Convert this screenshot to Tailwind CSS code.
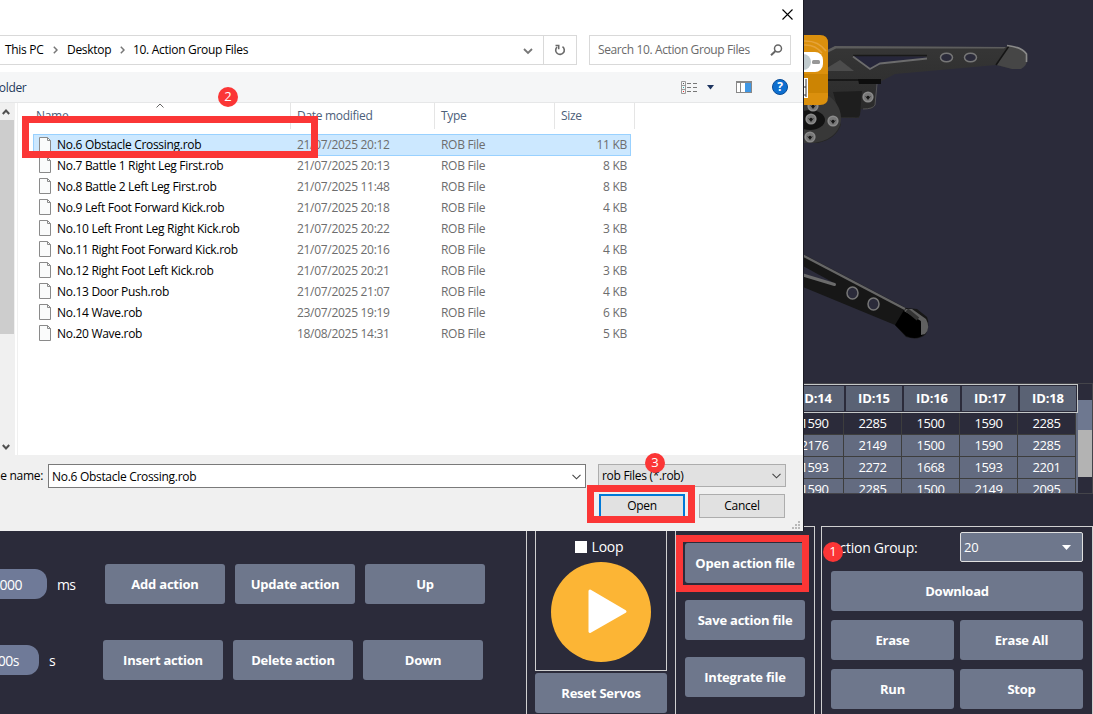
<!DOCTYPE html>
<html lang="en">
<head>
<meta charset="utf-8">
<title>Open action file</title>
<script src="https://cdn.jsdelivr.net/npm/@tailwindcss/browser@4"></script>
</head>
<body class="bg-[#2b2b3a] overflow-hidden">
<div class="relative w-[1093px] h-[714px] overflow-hidden bg-[#2b2b3a] font-['Open_Sans','Noto_Sans',sans-serif] text-white whitespace-nowrap">

<!-- Main application -->
<div class="flex flex-col h-full">
  <!-- 3D robot view -->
  <div class="h-[383px] flex justify-end shrink-0">
    <svg width="300" height="383" viewBox="0 0 300 383">
      <defs>
        <linearGradient id="leg" x1="0" y1="0" x2="0" y2="1"><stop offset="0" stop-color="#363636"/><stop offset="1" stop-color="#252525"/></linearGradient>
        <g id="screw"><circle r="5.6" fill="#8b8b8b"/><circle r="4" fill="#777"/><path d="M-3 -1L0 .4L3 -1L0 3Z" fill="#1c1c1c"/><circle r="1.3" fill="#161616"/></g>
      </defs>
      <path d="M0 52H34L42 46L213 47L216 45L229 49Q235 54 234 61Q230 70 220 69L203 65L102 74L83 84L82 104Q81 109 76 109H68L66 118H46L48 125Q43 139 25 143H0Z" fill="url(#leg)"/>
      <path d="M30 52L42 46L213 47L211 48.500L43 48.500L34 53Z" fill="#5d5d5d"/>
      <path d="M60 56L133 56.500L134 59L89 64L77 70Z" fill="#26263a"/>
      <path d="M60 55.500L134 55.500" stroke="#191919" stroke-width="1.500"/>
      <path d="M60 56.500L77 69L87 63.500L134 58.500" fill="none" stroke="#6c6c6c" stroke-width="1.800"/>
      <path d="M29 71L47 60L61 71Z" fill="#4c4c4c"/>
      <path d="M28 80H67" stroke="#111" stroke-width="1.500"/>
      <path d="M65 79H88V84H66Z" fill="#0d0d0d"/>
      <g fill="#2b2b3a" stroke="#777" stroke-width="1.500"><ellipse cx="153.500" cy="57.500" rx="6" ry="4.300"/><ellipse cx="177.500" cy="57.500" rx="6" ry="4.300"/></g>
      <path d="M215 46Q228 46 234 54Q236 65 228 69L219 69L204 65Z" fill="#464646"/>
      <path d="M203 65L216 46" stroke="#151515" stroke-width="1.500"/>
      <path d="M214 45.500Q229 47 233.500 54V62" fill="none" stroke="#8a8a8a" stroke-width="1.600"/>
      <path d="M40 92L69 91L67 115Q66 118 62 117L47 117Z" fill="#1e1e1e"/>
      <path d="M36 96Q49 106 48 121Q44 140 20 143H10V100Z" fill="#383838"/>
      <path d="M84 84L82 105Q80 109 70 109" fill="none" stroke="#555"/>
      <ellipse cx="17" cy="120" rx="15" ry="10" fill="#121212"/>
      <use href="#screw" x="75" y="97"/><use href="#screw" x="20" y="106"/><use href="#screw" x="18" y="119"/><use href="#screw" x="40" y="121"/><use href="#screw" x="17" y="137"/>
      <path d="M10 35H27Q35 35 35 43V97Q35 105 27 105H10Z" fill="#db900d"/>
      <path d="M10 41Q25 40 33 51M10 45Q22 44 29 53" stroke="#e5a33a" fill="none" stroke-width="1.500"/>
      <path d="M10 74H35V93H10Z" fill="#cc8403"/>
      <rect x="-10" y="52" width="40" height="20" rx="8" fill="white"/><circle cx="10" cy="62" r="8" fill="#c0cacd"/><rect x="19" y="60" width="8" height="4" rx="1.500" fill="#979797"/>
      <path d="M10 78H15V98H10Z" fill="white"/><path d="M13 79V97M10 87H13M10 95H13" stroke="#333" stroke-width="1"/>
      <path d="M10 254L113 308L124 309L134 317Q137 324 133 334Q126 341 113 337L102 325L10 287Z" fill="#171717"/>
      <path d="M10 255.500L112 309" stroke="#666" stroke-width="2.500"/>
      <path d="M10 266L41 283L10 276Z" fill="#2b2b3a"/>
      <path d="M10 275L41.500 284.500" stroke="#6b6b6b" stroke-width="3" stroke-linecap="round"/>
      <g fill="#2b2b3a" stroke="#777" stroke-width="1.500"><ellipse cx="59.500" cy="293" rx="5.500" ry="6"/><ellipse cx="80.500" cy="304" rx="5.500" ry="6"/></g>
      <path d="M111 310L102 325L113 336Q124 341 131 334L127 320Z" fill="#000"/>
      <path d="M113 309L119 309L133 319Q138 328 132 334L128 335V321L111 311Z" fill="#606060"/>
      <path d="M114 310L125 319" stroke="#333" stroke-width="4"/>
    </svg>
  </div>

  <!-- Servo value table -->
  <div class="h-[111px] shrink-0 flex justify-end border-y border-r border-[#44444a]">
    <div class="w-[292px] flex flex-col overflow-hidden">
      <div class="h-[29px] shrink-0 flex border border-[#c5c8c8] p-px gap-[2px] text-[13px] font-bold tracking-[-0.15px]" id="thead"></div>
      <div class="flex flex-col text-[13px] tracking-[-0.42px] bg-[#636b80]" id="tbody"></div>
    </div>
    <div class="w-[14px] flex flex-col pt-4">
      <div class="h-[30px] bg-[#6e7890]"></div>
      <div class="h-[47px] bg-[#b3b3b3]"></div>
    </div>
  </div>

  <!-- Control panels -->
  <div class="mt-8 h-[188px] flex text-[13px] font-bold tracking-[-0.22px] shrink-0">
    <div class="w-[527px] border-r border-t border-[#d0d0d0] flex flex-col pt-[37px]">
      <div class="flex h-10 items-center">
        <div class="w-[47px] h-[30px] rounded-r-[12px] bg-[#6f7a98] flex items-center justify-end pt-0.5 pr-[25px] font-normal text-sm tracking-[-0.5px]">1000</div>
        <div class="w-[58px] pt-0.5 pl-[10px] font-normal text-sm tracking-[-0.6px]">ms</div>
        <div class="flex gap-[10px]">
          <div class="w-[120px] h-10 pt-0.5 rounded-[3px] bg-[#6e778c] flex items-center justify-center">Add action</div>
          <div class="w-[120px] h-10 pt-0.5 rounded-[3px] bg-[#6e778c] flex items-center justify-center">Update action</div>
          <div class="w-[120px] h-10 pt-0.5 rounded-[3px] bg-[#6e778c] flex items-center justify-center">Up</div>
        </div>
      </div>
      <div class="flex h-10 items-center mt-9">
        <div class="w-[39px] h-[30px] rounded-r-[12px] bg-[#6f7a98] flex items-center justify-end pt-0.5 pr-5 font-normal text-sm tracking-[-0.5px]">0.00s</div>
        <div class="w-16 pt-0.5 pl-[10px] font-normal text-sm">s</div>
        <div class="flex gap-[10px]">
          <div class="w-[120px] h-10 pt-0.5 rounded-[3px] bg-[#6e778c] flex items-center justify-center">Insert action</div>
          <div class="w-[120px] h-10 pt-0.5 rounded-[3px] bg-[#6e778c] flex items-center justify-center">Delete action</div>
          <div class="w-[120px] h-10 pt-0.5 rounded-[3px] bg-[#6e778c] flex items-center justify-center">Down</div>
        </div>
      </div>
    </div>
    <div class="ml-2 w-[132px] flex flex-col gap-[2px]">
      <div class="h-[145px] border border-[#d0d0d0] flex flex-col items-center pt-[10px]">
        <div class="h-[20px] flex items-center gap-[5px] font-normal text-sm pr-[4px] tracking-[-0.2px]"><span class="size-[12px] bg-white"></span>Loop</div>
        <svg class="mt-[5px] shrink-0" width="100" height="100" viewBox="0 0 100 100"><circle cx="50" cy="50" r="50" fill="#fcb535"/><path d="M39 29L74 49.500L39 69.500Z" fill="white" stroke="white" stroke-width="3" stroke-linejoin="round"/></svg>
      </div>
      <div class="h-10 pt-0.5 rounded-[3px] bg-[#6e778c] flex items-center justify-center shrink-0">Reset Servos</div>
    </div>
    <div class="ml-2 w-[140px] border border-b-0 border-[#d0d0d0] flex flex-col pt-4 pl-[9px] gap-[17px]">
      <div class="w-[120px] h-10 pt-0.5 rounded-[3px] bg-[#6e778c] flex items-center justify-center">Open action file</div>
      <div class="w-[120px] h-10 pt-0.5 rounded-[3px] bg-[#6e778c] flex items-center justify-center">Save action file</div>
      <div class="w-[120px] h-10 pt-0.5 rounded-[3px] bg-[#6e778c] flex items-center justify-center">Integrate file</div>
    </div>
    <div class="ml-[6px] w-[272px] border border-b-0 border-[#d0d0d0] pt-[5px] pl-[9px] pr-[9px] flex flex-col gap-[9px]">
      <div class="flex h-[30px] items-center font-normal text-sm">
        <div class="w-[129px] pt-0.5 tracking-[-0.27px]">Action Group:</div>
        <div class="w-[123px] h-[30px] pt-px border border-[#e0e0e0] rounded-[2px] bg-[#6e778c] flex items-center justify-between pl-[3px] pr-[11px] text-[13px] tracking-[-0.3px]">20
          <svg width="9" height="5" viewBox="0 0 9 5"><path d="M0 0H9L4.500 5Z" fill="white"/></svg>
        </div>
      </div>
      <div class="h-10 pt-0.5 rounded-[3px] bg-[#6e778c] flex items-center justify-center">Download</div>
      <div class="grid grid-cols-2 gap-x-[6px] gap-y-[9px]">
        <div class="h-10 pt-0.5 rounded-[3px] bg-[#6e778c] flex items-center justify-center">Erase</div>
        <div class="h-10 pt-0.5 rounded-[3px] bg-[#6e778c] flex items-center justify-center">Erase All</div>
        <div class="h-10 pt-0.5 rounded-[3px] bg-[#6e778c] flex items-center justify-center">Run</div>
        <div class="h-10 pt-0.5 rounded-[3px] bg-[#6e778c] flex items-center justify-center">Stop</div>
      </div>
    </div>
  </div>
</div>

<!-- File dialog -->
<div class="absolute left-0 top-0 w-[803px] h-[531px] bg-white text-black flex flex-col text-xs tracking-[-0.3px] shadow-[1px_0_0_#1b1b24]">
  <div class="h-[35px] flex justify-end pt-[9px] pr-[10px]">
    <svg width="11" height="11" viewBox="0 0 11 11"><path d="M.5.5L10.500 10.500M10.500.5L.5 10.500" stroke="black" stroke-width="1.100"/></svg>
  </div>
  <div class="h-[30px] flex gap-3">
    <div class="w-[577px] border border-l-0 border-[#d9d9d9] flex items-stretch">
      <div class="w-[543px] flex items-center pl-[5px]">
        <span class="w-[48px]">This PC</span>
        <svg width="5" height="8" viewBox="0 0 5 8" fill="none" stroke="#777" stroke-width="1.500"><path d="M.8.8L4 4L.8 7.200"/></svg>
        <span class="w-[53px] ml-[9px]">Desktop</span>
        <svg width="5" height="8" viewBox="0 0 5 8" fill="none" stroke="#777" stroke-width="1.500"><path d="M.8.8L4 4L.8 7.200"/></svg>
        <span class="ml-[8px] grow">10. Action Group Files</span>
        <svg class="mr-[10px] mt-0.5" width="10" height="7" viewBox="0 0 10 7" fill="none" stroke="#777" stroke-width="1.800"><path d="M1 1L5 5L9 1"/></svg>
      </div>
      <div class="grow border-l border-[#d9d9d9] flex items-center justify-center">
        <svg width="12" height="12" viewBox="0 0 12 12" fill="none" stroke="#6a6a6a" stroke-width="1.600"><path d="M8.500 2.600A4.300 4.300 0 1 1 3 3"/><path d="M1.500 1.500H4.700V5.200" /></svg>
      </div>
    </div>
    <div class="w-[202px] border border-[#d9d9d9] flex items-center justify-between pl-2 pr-[7px] text-[#6a6a6a]">
      <span class="tracking-[-0.38px]">Search 10. Action Group Files</span>
      <svg width="13" height="12" viewBox="0 0 13 12" fill="none" stroke="#666" stroke-width="1.500"><circle cx="8" cy="4.500" r="3.500"/><path d="M5.500 7L1 11.200" stroke-width="2"/></svg>
    </div>
  </div>
  <div class="mt-[7px] h-[31px] shrink-0 bg-[#f5f6f7] border-b border-[#e6e7e8] flex items-center text-[#1e395b]">
    <span class="w-[681px] -indent-[5px] pt-px">folder</span>
    <svg width="17" height="13" viewBox="0 0 17 13"><path d="M.5.5H4.500V12.500H.5ZM.5 4.500H4.500M.5 8.500H4.500" fill="none" stroke="#9a9a9a"/><rect x="2" y="2" width="1" height="1" fill="#555"/><rect x="2" y="6" width="1" height="1" fill="#2aa"/><rect x="2" y="10" width="1" height="1" fill="#e33"/><path d="M6 2.500H10M12 2.500H16M6 6.500H10M12 6.500H16M6 10.500H10M12 10.500H16" stroke="#777"/></svg>
    <svg class="ml-[9px]" width="7" height="5" viewBox="0 0 7 5"><path d="M0 0H7L3.500 4.500Z" fill="#1e3560"/></svg>
    <svg class="ml-[22px]" width="16" height="12" viewBox="0 0 16 12"><rect x=".5" y=".5" width="15" height="11" fill="#fff" stroke="#888"/><path d="M0 1H16" stroke="#888" stroke-width="2"/><path d="M4.500 2V11" stroke="#888"/><rect x="9" y="2" width="6" height="9" fill="#3f97e4"/></svg>
    <div class="ml-5 size-4 rounded-full bg-[#0d6fd0] border border-[#0a4c96] text-white font-bold text-[12px] flex items-center justify-center">?</div>
  </div>
  <div class="h-[352px] shrink-0 flex">
    <div class="w-[15px] bg-[#f0f0f0] flex flex-col items-center">
      <div class="h-[17px] flex items-center pr-[3px]"><svg width="8" height="6" viewBox="0 0 8 6" fill="none" stroke="#505050" stroke-width="2"><path d="M.8 5L4 1.500L7.200 5"/></svg></div>
      <div class="w-[14px] self-start h-[214px] bg-[#cdcdcd]"></div>
      <div class="mt-auto h-[17px] flex items-center pr-[3px]"><svg width="8" height="6" viewBox="0 0 8 6" fill="none" stroke="#505050" stroke-width="2"><path d="M.8 1L4 4.500L7.200 1"/></svg></div>
    </div>
    <div class="ml-[2px] grow border-l border-[#f0f0f0] flex flex-col">
      <div class="h-[26px] flex items-center text-[#4c607a]">
        <div class="w-[273px] h-full border-r border-[#e5e5e5] pl-[18px] flex items-center relative">Name
          <svg class="absolute left-[138px] top-0" width="8" height="5" viewBox="0 0 8 5" fill="none" stroke="#666"><path d="M.5 4.500L4 1L7.500 4.500"/></svg>
        </div>
        <div class="w-[144px] h-full border-r border-[#e5e5e5] pl-[6px] flex items-center">Date modified</div>
        <div class="w-[120px] h-full border-r border-[#e5e5e5] pl-[6px] flex items-center">Type</div>
        <div class="w-[80px] h-full border-r border-[#e5e5e5] pl-[6px] flex items-center">Size</div>
      </div>
      <div class="mt-[5px] ml-[15px] w-[598px] flex flex-col" id="files"></div>
    </div>
  </div>
  <div class="grow bg-[#f0f0f0] flex flex-col pt-[9px]">
    <div class="flex">
      <div class="w-[48px] h-6 flex items-center justify-end pr-[5px]">File name:</div>
      <div class="w-[538px] h-6 pt-0.5 bg-white border border-[#7a7a7a] flex items-center justify-between pl-[3px] pr-1">No.6 Obstacle Crossing.rob
        <svg width="9" height="6" viewBox="0 0 9 6" fill="none" stroke="#444" stroke-width="1.100"><path d="M.5.8L4.500 4.800L8.500.8"/></svg>
      </div>
      <div class="ml-3 w-[188px] h-[23px] pt-px bg-[#e1e1e1] border border-[#adadad] flex items-center justify-between pl-[3px] pr-1">rob Files (*.rob)
        <svg width="9" height="6" viewBox="0 0 9 6" fill="none" stroke="#444" stroke-width="1.100"><path d="M.5.8L4.500 4.800L8.500.8"/></svg>
      </div>
    </div>
    <div class="flex justify-end mt-[6px] pr-[18px] gap-[14px]">
      <div class="w-[86px] h-6 bg-[#e1e1e1] border-2 border-[#0078d7] flex items-center justify-center">Open</div>
      <div class="w-[86px] h-6 bg-[#e1e1e1] border border-[#adadad] flex items-center justify-center">Cancel</div>
    </div>
    <svg class="ml-auto mr-[3px] mt-[3px]" width="8" height="8" viewBox="0 0 8 8" fill="#b8b8b8"><path d="M6 0h2v2h-2zM3 3h2v2h-2zM6 3h2v2h-2zM0 6h2v2h-2zM3 6h2v2h-2zM6 6h2v2h-2z"/></svg>
  </div>
</div>

<!-- Step annotations -->
<div class="absolute left-[22px] top-[116px] w-[296px] h-[42px] border-[7px] border-[#fb3636]"></div>
<div class="absolute left-[587px] top-[485px] w-[108px] h-[38px] border-[7px] border-[#fb3636]"></div>
<div class="absolute left-[676px] top-[535px] w-[133px] h-[57px] border-[7px] border-[#fb3636]"></div>
<div class="absolute left-[218px] top-[87px] size-5 rounded-full bg-[#fb3636] flex items-center justify-center text-[13px]">2</div>
<div class="absolute left-[645px] top-[453px] size-5 rounded-full bg-[#fb3636] flex items-center justify-center text-[13px]">3</div>
<div class="absolute left-[823px] top-[542px] size-5 rounded-full bg-[#fb3636] flex items-center justify-center text-[13px]">1</div>
</div>

<script>
const files = [
  ['No.6 Obstacle Crossing.rob','21/07/2025 20:12','11 KB'],
  ['No.7 Battle 1 Right Leg First.rob','21/07/2025 20:13','8 KB'],
  ['No.8 Battle 2 Left Leg First.rob','21/07/2025 11:48','8 KB'],
  ['No.9 Left Foot Forward Kick.rob','21/07/2025 20:18','4 KB'],
  ['No.10 Left Front Leg Right Kick.rob','21/07/2025 20:22','3 KB'],
  ['No.11 Right Foot Forward Kick.rob','21/07/2025 20:16','4 KB'],
  ['No.12 Right Foot Left Kick.rob','21/07/2025 20:21','3 KB'],
  ['No.13 Door Push.rob','21/07/2025 21:07','4 KB'],
  ['No.14 Wave.rob','23/07/2025 19:19','6 KB'],
  ['No.20 Wave.rob','18/08/2025 14:31','5 KB']
];
document.getElementById('files').innerHTML = files.map((f, i) => `
  <div class="${i ? 'h-[21px] border-x border-transparent' : 'h-[22px] -mb-px border border-[#99d1ff] bg-[#cce8ff]'} flex items-center text-[#6d6d6d]">
    <svg class="ml-[5px] -mt-px" width="12" height="16" viewBox="0 0 12 16"><path d="M.5.5H8.500L11.500 3.500V15.500H.5Z" fill="#fafbfb" stroke="#8a8a8a"/><path d="M8.500.5V3.500H11.500" fill="none" stroke="#8a8a8a"/></svg>
    <span class="ml-[6px] w-[240px] text-black">${f[0]}</span>
    <span class="w-[144px]">${f[1]}</span>
    <span class="w-[120px]">ROB File</span>
    <span class="w-[66px] text-right">${f[2]}</span>
  </div>`).join('');

document.getElementById('thead').innerHTML = ['ID:14','ID:15','ID:16','ID:17','ID:18'].map(t =>
  `<div class="w-[56px] h-[25px] shrink-0 bg-[#5a6274] flex items-center justify-center">${t}</div>`).join('');

document.getElementById('tbody').innerHTML = [
  [1590,2285,1500,1590,2285],
  [2176,2149,1500,1590,2285],
  [1593,2272,1668,1593,2201],
  [1590,2285,1500,2149,2095]
].map((r, i) => `<div class="flex h-[22px] shrink-0">${r.map(v =>
  `<div class="w-[58px] border-r border-b border-[#3d3d3d] flex items-center justify-center ${i ? '' : 'bg-[#2b2b3a]'}">${v}</div>`).join('')}</div>`).join('');
</script>
</body>
</html>
